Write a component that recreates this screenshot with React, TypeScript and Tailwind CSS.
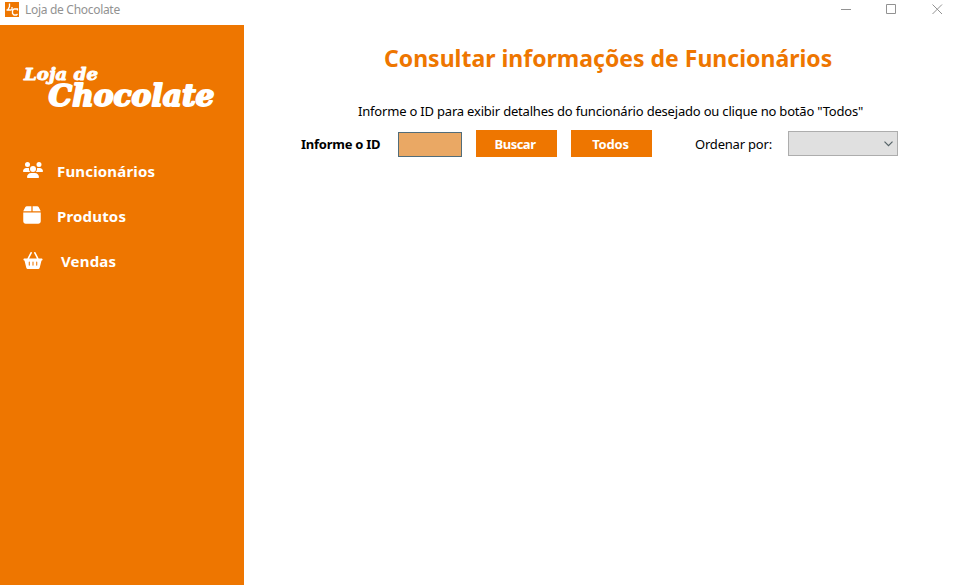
import type { ReactNode } from "react";
import { FaBasketShopping, FaBox, FaUsers } from "react-icons/fa6";

function TitleBar() {
  return (
    <header className="flex h-[25px] shrink-0 items-start bg-white">
      <svg className="ml-[5px] mt-[2px] h-[15px] w-[14px]" viewBox="0 0 14 15" fill="none">
        <rect width="14" height="15" fill="#ee7600" />
        <path d="M4.500 1.500v3L3 7.500M1.500 8h5M7 5v3M12.500 8.500V7H9L7.500 8.500v3L9 13h2.500l1-1" stroke="#fff" strokeWidth="1.300" />
      </svg>
      <span className="ml-[6px] mt-[2px] text-[12px] leading-[16px] tracking-[-0.3px] text-[#929292]">Loja de Chocolate</span>
      <div className="ml-auto mr-[15px] mt-[4px] flex gap-[35px]">
        <svg className="-mr-px h-[11px] w-[11px]" viewBox="0 0 11 11"><path d="M0 5.500h10" stroke="#929292" /></svg>
        <svg className="h-[11px] w-[11px]" viewBox="0 0 11 11"><path d="M.5.500h9v9h-9z" fill="none" stroke="#929292" /></svg>
        <svg className="h-[11px] w-[11px]" viewBox="0 0 11 11"><path d="m.5.500 9.500 9.500M10 .5.500 10" stroke="#929292" /></svg>
      </div>
    </header>
  );
}

function Logo() {
  return (
    <svg
      className="ml-[20px] mt-[35px] h-[54px] w-[200px]"
      viewBox="0 0 200 54"
      fill="#fff"
      stroke="#fff"
      strokeLinejoin="round"
      fontFamily="'DejaVu Serif', serif"
      fontWeight="700"
      fontStyle="italic"
    >
      <text x="4" y="19.500" fontSize="17.500" strokeWidth="0.9" textLength="74" lengthAdjust="spacingAndGlyphs">Loja de</text>
      <text x="28.500" y="46" fontSize="29" strokeWidth="1.900" textLength="166" lengthAdjust="spacingAndGlyphs">Chocolate</text>
    </svg>
  );
}

function NavItem({ icon, label, className }: { icon: ReactNode; label: string; className: string }) {
  return (
    <a className="flex h-[45px] items-center pl-[23px] text-white">
      <span className="flex w-[20px]">{icon}</span>
      <span className={`-mt-[2px] whitespace-nowrap text-[15px] font-bold leading-[20px] tracking-[0.17px] ${className}`}>{label}</span>
    </a>
  );
}

export default function App() {
  return (
    <div className="flex h-[585px] w-[958px] flex-col overflow-hidden bg-white font-['Noto_Sans','Open_Sans',sans-serif] text-black">
      <TitleBar />
      <div className="flex flex-1">
        <aside className="w-[244px] shrink-0 bg-[#ee7600]">
          <Logo />
          <nav className="mt-[35px]">
            <NavItem icon={<FaUsers className="-mt-[4px] h-[16px] w-[20px]" />} label="Funcionários" className="ml-[14px]" />
            <NavItem icon={<FaBox className="-mt-[3px] h-[20px] w-[18px]" />} label="Produtos" className="ml-[14px]" />
            <NavItem icon={<FaBasketShopping className="-mt-[2px] h-[17px] w-[20px]" />} label="Vendas" className="ml-[18px]" />
          </nav>
        </aside>
        <main className="flex-1">
          <h1 className="ml-[140px] mt-[16px] whitespace-nowrap text-[23px] font-bold leading-[34px] text-[#ee7600]">
            Consultar informações de Funcionários
          </h1>
          <p className="ml-[114px] mt-[26px] whitespace-nowrap text-[13px] leading-[20px] tracking-[-0.195px]">
            Informe o ID para exibir detalhes do funcionário desejado ou clique no botão "Todos"
          </p>
          <div className="ml-[57px] mt-[9px] flex h-[27px] items-start whitespace-nowrap text-[13px] leading-[27px]">
            <label className="w-[97px] pt-px font-bold tracking-[-0.25px]">Informe o ID</label>
            <input className="mt-[2px] h-[25px] w-[64px] border border-[#526d7a] bg-[#eaa864]" />
            <button className="ml-[14px] h-[27px] w-[81px] bg-[#ee7600] pr-[3px] pt-[1px] font-bold tracking-[-0.5px] text-white">Buscar</button>
            <button className="ml-[14px] h-[27px] w-[81px] bg-[#ee7600] pr-[2px] pt-[1px] font-bold tracking-[-0.2px] text-white">Todos</button>
            <span className="ml-[43px] w-[93px] pt-px tracking-[-0.2px]">Ordenar por:</span>
            <button className="mt-[1px] flex h-[25px] w-[110px] items-center justify-end border border-[#adadad] bg-[#e0e0e0] pr-[4px]">
              <svg className="h-[6px] w-[9px]" viewBox="0 0 9 6"><path d="m.5.700 4 4 4-4" fill="none" stroke="#566367" strokeWidth="1.200" /></svg>
            </button>
          </div>
        </main>
      </div>
    </div>
  );
}
